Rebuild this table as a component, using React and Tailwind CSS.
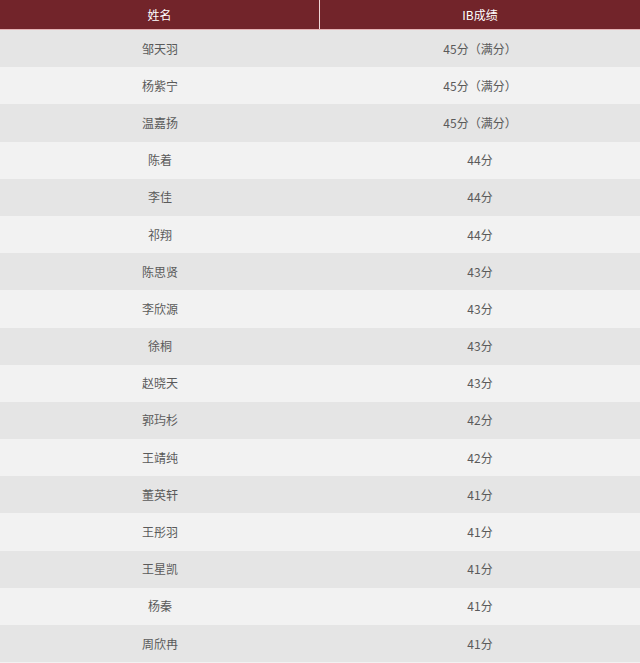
import React from 'react';

const rows = [
  ["邹天羽", "45分（满分）"],
  ["杨紫宁", "45分（满分）"],
  ["温嘉扬", "45分（满分）"],
  ["陈着", "44分"],
  ["李佳", "44分"],
  ["祁翔", "44分"],
  ["陈思贤", "43分"],
  ["李欣源", "43分"],
  ["徐桐", "43分"],
  ["赵晓天", "43分"],
  ["郭玙杉", "42分"],
  ["王靖纯", "42分"],
  ["董英轩", "41分"],
  ["王彤羽", "41分"],
  ["王星凯", "41分"],
  ["杨秦", "41分"],
  ["周欣冉", "41分"],
];

export default function App() {
  return (
    <div className="w-[640px] h-[663px] overflow-hidden bg-[#f2f2f2] font-['Noto_Sans_CJK_SC',sans-serif] text-[12px]">
      <div className="grid grid-cols-2 h-[30px] bg-[#72242a] text-white border-b border-[#e6b4b6]">
        <div className="flex items-center justify-center border-r border-[#f0d8d8]">姓名</div>
        <div className="flex items-center justify-center">IB成绩</div>
      </div>
      {rows.map((r, i) => (
        <div
          key={i}
          className={"grid grid-cols-2 h-[37.2px] text-[#5a5a5a] " + (i % 2 === 0 ? "bg-[#e5e5e5]" : "bg-[#f2f2f2]")}
        >
          <div className="flex items-center justify-center">{r[0]}</div>
          <div className="flex items-center justify-center">{r[1]}</div>
        </div>
      ))}
    </div>
  );
}
